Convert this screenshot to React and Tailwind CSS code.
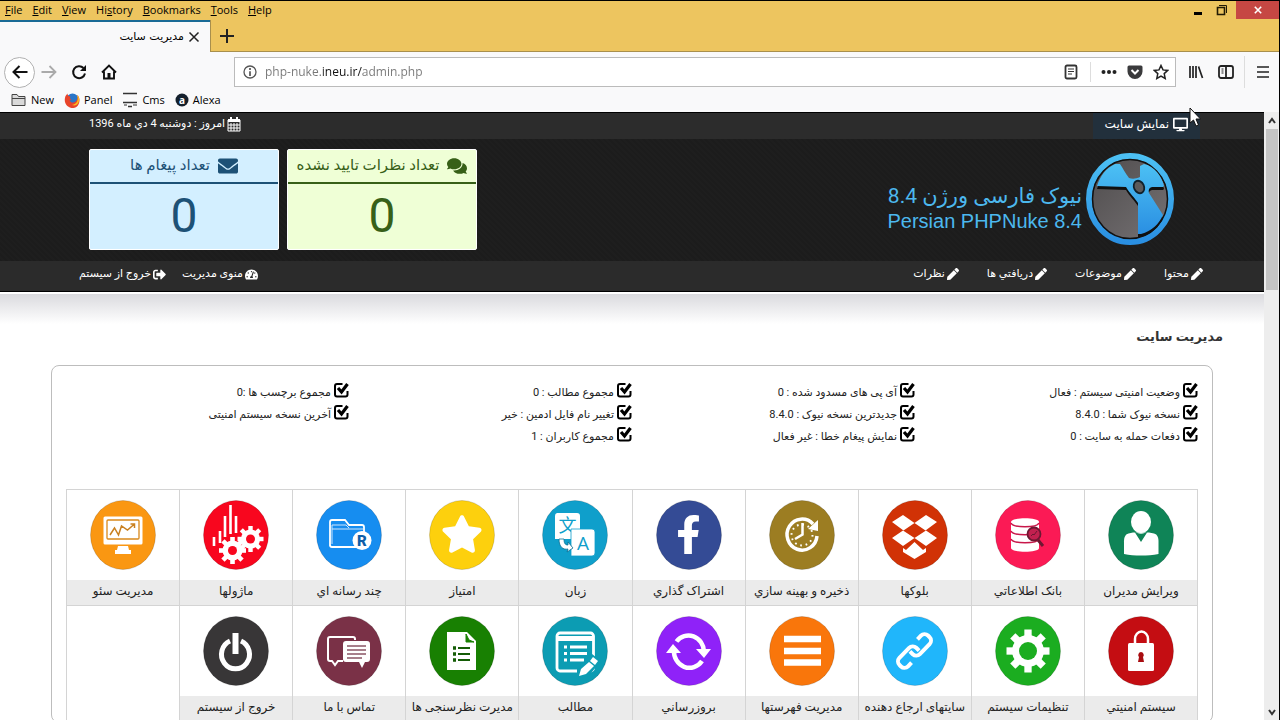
import { FaComments, FaDesktop, FaEnvelope, FaFacebookF, FaPen, FaSignOutAlt, FaStar, FaTachometerAlt } from 'react-icons/fa'

const menus = [
  ['', 'F', 'ile'],
  ['', 'E', 'dit'],
  ['', 'V', 'iew'],
  ['Hi', 's', 'tory'],
  ['', 'B', 'ookmarks'],
  ['', 'T', 'ools'],
  ['', 'H', 'elp'],
]

const contentLinks = ['محتوا', 'موضوعات', 'دريافتي ها', 'نظرات']

const stats = [
  ['وضعیت امنیتی سیستم : فعال', 'نسخه نیوک شما : 8.4.0', 'دفعات حمله به سایت : 0'],
  ['آی پی های مسدود شده : 0', 'جدیدترین نسخه نیوک : 8.4.0', 'نمایش پیغام خطا : غیر فعال'],
  ['مجموع مطالب : 0', 'تغییر نام فایل ادمین : خیر', 'مجموع کاربران : 1'],
  ['مجموع برچسب ها :0', 'آخرین نسخه سیستم امنیتی'],
]

function Gear({ cx, cy, r, hole, fill, color }) {
  return (
    <g transform={`translate(${cx} ${cy})`}>
      <g fill={color}>
        {[0, 45, 90, 135, 180, 225, 270, 315].map((a) => (
          <rect key={a} x={-r * 0.17} y={-r} width={r * 0.34} height={r * 0.5} transform={`rotate(${a})`} />
        ))}
        <circle r={r * 0.74} />
      </g>
      <circle r={hole} fill={fill} />
    </g>
  )
}

const tiles = [
  {
    label: 'ویرایش مدیران',
    color: '#0f8457',
    art: (
      <>
        <ellipse cx="33" cy="22" rx="10" ry="11" fill="#fff" />
        <path d="M25 32.500h16l5 1c3.500 1 4.500 4 4.500 8V54c-11 2-24 2-34.500 0V41.500c0-4 1-7 4.500-8z" fill="#fff" />
        <path d="M26 31l7 11 7-11c-4 3.500-10 3.500-14 0z" fill="#0f8457" />
      </>
    ),
  },
  {
    label: 'بانک اطلاعاتي',
    color: '#fb1a55',
    art: (
      <>
        <path d="M16 22c0-5 28-5 28 0v26c0 5-28 5-28 0z" fill="#fff" />
        <path d="M16 23c2 5 26 5 28 0M16 31c2 5 26 5 28 0M16 39c2 5 26 5 28 0" fill="none" stroke="#c8174a" strokeWidth="1.600" />
        <circle cx="39" cy="34" r="6.500" fill="#c2204f" stroke="#6d1732" strokeWidth="1.800" />
        <path d="M36 36l2-2 1 1 3-4" stroke="#6d1732" fill="none" />
        <path d="M43 40l5 6" stroke="#6d1732" strokeWidth="3" />
      </>
    ),
  },
  {
    label: 'بلوکها',
    color: '#d13206',
    art: (
      <g fill="#fff">
        <path d="M10 22l11-7 11.500 8-11 7.500z M55 22l-11-7-11.500 8 11 7.500z" />
        <path d="M10 38l11-7.500L32.500 38l-11.500 8z M55 38l-11-7.500L32.500 38l11.500 8z" />
        <path d="M21 48l3 2 8.500-8 8.500 8 3-2v4l-11.500 7L21 52z" />
      </g>
    ),
  },
  {
    label: 'ذخیره و بهینه سازي',
    color: '#9c7d22',
    art: (
      <>
        <path d="M44 24a15 15.500 0 1 0 4 12" fill="none" stroke="#fff" strokeWidth="3.500" />
        <path d="M49 20v11l-10-2z" fill="#fff" />
        <circle cx="33" cy="35" r="10.500" fill="none" stroke="#fff" strokeWidth="2" strokeDasharray="1.700 3.800" />
        <path d="M33.500 23v11.500L26 39" fill="none" stroke="#fff" strokeWidth="2.500" />
      </>
    ),
  },
  {
    label: 'اشتراک گذاري',
    color: '#344b95',
    art: <FaFacebookF x="13" y="15" size="39" color="#fff" />,
  },
  {
    label: 'زبان',
    color: '#0f9fcb',
    art: (
      <>
        <path d="M15 13h20a3 3 0 0 1 3 3v23H13V16a3 3 0 0 1 2-3z" fill="#fff" />
        <text x="25.500" y="32" textAnchor="middle" fontSize="18" fill="#0f9fcb" className="font-['Noto_Sans_CJK_SC',sans-serif]">文</text>
        <path d="M29 29h21a3 3 0 0 1 3 3v21a3 3 0 0 1-3 3H29z" fill="#fff" stroke="#0f9fcb" strokeWidth="0.800" />
        <text x="41" y="50" textAnchor="middle" fontSize="19" fill="#0f9fcb" className="font-['Open_Sans',sans-serif]">A</text>
        <path d="M17 39c0 8 4 11 9 10l-1 3 6-4-5-6v3c-3 0-4-2-4-6z" fill="#fff" stroke="#0b6f93" strokeWidth="0.800" />
      </>
    ),
  },
  {
    label: 'امتیاز',
    color: '#fdd00d',
    art: <FaStar x="12" y="13" size="42" color="#fff" />,
  },
  {
    label: 'چند رسانه اي',
    color: '#168df0',
    art: (
      <>
        <path d="M14 46V22a2 2 0 0 1 2-2h13l4 5h13a2 2 0 0 1 2 2v20H16a2 2 0 0 1-2-2z" fill="none" stroke="#fff" strokeWidth="1.800" />
        <path d="M16 29h31M16 44V25h14l3 3" fill="none" stroke="#cfe6fc" strokeWidth="1" />
        <circle cx="46" cy="40.500" r="9.500" fill="#fff" />
        <text x="46" y="46" textAnchor="middle" fontSize="15" fontWeight="900" fill="#0f5fa8" className="font-[Roboto,sans-serif]">R</text>
      </>
    ),
  },
  {
    label: 'ماژولها',
    color: '#f8061e',
    art: (
      <>
        <path d="M11 37v9M17 31v12M22 16v21M27.500 5v29M33 16v17" stroke="#fff" strokeWidth="2.600" />
        <Gear cx={47.5} cy={39} r={13} hole={4.5} fill="#f8061e" color="#fff" />
        <Gear cx={29.5} cy={50.5} r={13.5} hole={4.5} fill="#f8061e" color="#fff" />
      </>
    ),
  },
  {
    label: 'مدیریت سئو',
    color: '#fa9712',
    art: (
      <>
        <rect x="13.500" y="16.500" width="39" height="28" rx="1.500" fill="#fff" />
        <rect x="17" y="20" width="32" height="19" rx="1" fill="none" stroke="#d9891b" strokeWidth="1.300" />
        <path d="M20 35l4.500-7 4 7 3-9 6 4 7-6m-4 0h4v4" fill="none" stroke="#c98020" strokeWidth="1.500" />
        <path d="M28 46h10l1 4H27zM25 50h16v4H25z" fill="#fff" />
      </>
    ),
  },
  {
    label: 'سیستم امنیتي',
    color: '#c40d12',
    art: (
      <>
        <path d="M27 28v-5a6.500 7.500 0 0 1 13 0v5" fill="none" stroke="#fff" strokeWidth="2.500" />
        <rect x="20" y="27" width="26" height="28" rx="1.500" fill="#fff" />
        <path d="M33 36a3 3 0 0 1 2 5l1 5h-6l1-5a3 3 0 0 1 2-5z" fill="#a80c10" />
      </>
    ),
  },
  {
    label: 'تنظیمات سیستم',
    color: '#1bad20',
    art: <Gear cx={33} cy={35} r={21.5} hole={9} fill="#1bad20" color="#fff" />,
  },
  {
    label: 'سایتهای ارجاع دهنده',
    color: '#20b6fb',
    art: (
      <g transform="rotate(-46 32.500 35)" fill="none" stroke="#fff" strokeWidth="4">
        <path d="M22 41h-5a5 5 0 0 1-5-5v-2a5 5 0 0 1 5-5h14a5 5 0 0 1 5 5v4" />
        <path d="M43 29h5a5 5 0 0 1 5 5v2a5 5 0 0 1-5 5H34a5 5 0 0 1-5-5v-4" />
      </g>
    ),
  },
  {
    label: 'مدیریت فهرستها',
    color: '#f9760b',
    art: <path d="M15 23h37M15 35h37M15 46.500h37" stroke="#fff" strokeWidth="6.500" />,
  },
  {
    label: 'بروزرساني',
    color: '#8f22f8',
    art: (
      <g fill="none" stroke="#fff" strokeWidth="4.500">
        <path d="M20.500 25.500a15.500 16.500 0 0 1 27.500 10" />
        <path d="M46 45a15.500 16.500 0 0 1-28-11" />
        <path d="M40 33h15l-7 9zM10 37h15l-8-9z" fill="#fff" stroke="none" />
      </g>
    ),
  },
  {
    label: 'مطالب',
    color: '#0c9cb3',
    art: (
      <>
        <rect x="15" y="17" width="36.500" height="38" rx="3" fill="none" stroke="#fff" strokeWidth="2.800" />
        <path d="M14 20h38v5H14z" fill="#fff" />
        <path d="M22 31h3M22 37.500h3M22 44h3M28 31h17M28 37.500h17M28 44h14" stroke="#fff" strokeWidth="3" />
        <path d="M50 38l9 7-14 17H35V52z" fill="#0c9cb3" />
        <path d="M51 41l5 4-3 4-5-4zM47 46l5 4-8 8-7 2 2-7z" fill="#fff" />
      </>
    ),
  },
  {
    label: 'مدیرت نظرسنجی ها',
    color: '#188002',
    art: (
      <>
        <path d="M18 16h20l9 9v29H18z" fill="#fff" />
        <path d="M37 18v8h8l-5-2z" fill="#188002" stroke="#188002" />
        <path d="M29 32h12M29 38h12M29 44h12" stroke="#145c06" strokeWidth="2" />
        <path d="M24 32h3M24 38h3M24 44h3" stroke="#145c06" strokeWidth="3.500" />
      </>
    ),
  },
  {
    label: 'تماس با ما',
    color: '#7a3147',
    art: (
      <>
        <path d="M39 24v-1a2 2 0 0 0-2-2H14a2 2 0 0 0-2 2v20a2 2 0 0 0 2 2h2l3 4 3-4h5" fill="none" stroke="#fff" strokeWidth="2" />
        <path d="M30 25h21a3 3 0 0 1 3 3v15a3 3 0 0 1-3 3h-2l-3 6-3-6H30a3 3 0 0 1-3-3V28a3 3 0 0 1 3-3z" fill="#fff" />
        <path d="M31 30h19M31 34h19M31 38h19M31 42h15" stroke="#8b5565" strokeWidth="1.300" />
      </>
    ),
  },
  {
    label: 'خروج از سیستم',
    color: '#383637',
    art: (
      <>
        <path d="M27 25a14 14.500 0 1 0 11 0" fill="none" stroke="#fff" strokeWidth="5" />
        <path d="M32.500 17v21" stroke="#383637" strokeWidth="9" />
        <path d="M32.500 17v21" stroke="#fff" strokeWidth="6" />
      </>
    ),
  },
]

function CheckMark() {
  return (
    <svg viewBox="0 0 16 16" className="w-4 h-4 shrink-0 -mt-1.5" fill="none" stroke="#000">
      <path d="M9.500 2H4a2 2 0 0 0-2 2v8.500a2 2 0 0 0 2 2h8.500a2 2 0 0 0 2-2V9" strokeWidth="2" />
      <path d="M5 6l3.500 4L14.500 2" strokeWidth="3.200" />
    </svg>
  )
}

function CalendarIcon() {
  return (
    <svg viewBox="0 0 14 15" className="w-3.5 h-[15px]" fill="none" stroke="#fff">
      <path d="M1 3h12v11H1z" />
      <path d="M1 3.500h12" strokeWidth="3" />
      <path d="M4 6v8M7 6v8M10 6v8M1 8h12M1 11h12" />
      <path d="M4 0v4M10 0v4" strokeWidth="2" />
    </svg>
  )
}

function Tile({ tile }) {
  return (
    <a href="#" className="block border-l border-b border-[#d4d4d4]">
      <span className="flex h-[90px] items-center justify-center">
        <svg viewBox="0 0 66 70" className="w-[66px] h-[70px]">
          <ellipse cx="33" cy="35" rx="32.500" ry="34.500" fill={tile.color} stroke="#000" strokeOpacity="0.150" />
          {tile.art}
        </svg>
      </span>
      <span className="block h-[25px] bg-[#ebebeb] text-center text-xs leading-[22px] text-[#222] whitespace-nowrap">{tile.label}</span>
    </a>
  )
}

function CountCard({ icon, title, className }) {
  return (
    <div className={`w-[190px] h-[101px] rounded-xs border border-white text-center ${className}`}>
      <h2 className="h-[34px] flex items-center justify-center gap-2 border-b-2 border-current text-[15px] whitespace-nowrap">
        {icon}
        <span>{title}</span>
      </h2>
      <p className="text-5xl leading-[64px]">0</p>
    </div>
  )
}

function Browser() {
  return (
    <header className="shrink-0 bg-[#f9f9fa] text-xs text-black font-['Open_Sans',sans-serif]">
      <div className="bg-[#edc55f] border-t border-black">
        <div className="flex h-[19px] items-start justify-between">
          <nav className="flex gap-2.5 pl-[5px] text-[11px] leading-[18px]">
            {menus.map(([pre, key, rest]) => (
              <button key={key + rest}>{pre}<u>{key}</u>{rest}</button>
            ))}
          </nav>
          <div className="flex items-center">
            <button aria-label="Minimize" className="w-6 h-[18px] flex items-end justify-center pb-1"><span className="w-2 h-[3px] bg-black" /></button>
            <button aria-label="Restore" className="w-6 h-[18px] flex items-center justify-center">
              <svg viewBox="0 0 12 12" className="w-3 h-3" fill="none" stroke="#221b05">
                <path d="M1.500 3.500h7v7h-7z" strokeWidth="1.600" />
                <path d="M3 1.500h7.500V9" />
              </svg>
            </button>
            <button aria-label="Close" className="ml-0.5 w-[43px] h-[18px] bg-[#c64743] text-white flex items-center justify-center">
              <svg viewBox="0 0 10 10" className="w-2 h-2" stroke="#fff" strokeWidth="2"><path d="M1 1l8 8M9 1l-8 8" /></svg>
            </button>
          </div>
        </div>
        <div className="flex h-8">
          <div className="w-[210px] border-t-2 border-[#1a6b96] bg-[#f9f9fa] flex items-center justify-end gap-1 pr-2.5">
            <span dir="rtl" className="font-['DejaVu_Sans',sans-serif] text-[11px]">مدیریت سایت</span>
            <button aria-label="Close tab">
              <svg viewBox="0 0 12 12" className="w-3 h-3" stroke="#222" strokeWidth="1.500"><path d="M1.500 1.500l9 9M10.500 1.500l-9 9" /></svg>
            </button>
          </div>
          <button aria-label="New tab" className="w-8 flex items-center justify-center border-l border-b border-[#a88f4c]">
            <svg viewBox="0 0 14 14" className="w-3.5 h-3.5" stroke="#222" strokeWidth="2"><path d="M7 0v14M0 7h14" /></svg>
          </button>
          <div className="flex-1 border-b border-[#a88f4c]" />
        </div>
      </div>

      <div className="flex h-10 items-center">
        <button aria-label="Back" className="ml-1 w-[31px] h-[31px] rounded-full border border-[#b1b1b1] bg-white flex items-center justify-center">
          <svg viewBox="0 0 16 16" className="w-4 h-4" fill="none" stroke="#111" strokeWidth="2"><path d="M15.500 8H1.500M7.500 2L1.500 8l6 6" /></svg>
        </button>
        <button aria-label="Forward" className="ml-1.5">
          <svg viewBox="0 0 16 16" className="w-4 h-4" fill="none" stroke="#aaa" strokeWidth="1.800"><path d="M.5 8h14M8.500 2l6 6-6 6" /></svg>
        </button>
        <button aria-label="Reload" className="ml-3.5">
          <svg viewBox="0 0 16 16" className="w-4 h-4" fill="none" stroke="#111" strokeWidth="2"><path d="M12.500 4A6 6 0 1 0 14 9.500" /><path d="M15 1v6H9z" fill="#111" stroke="none" /></svg>
        </button>
        <button aria-label="Home" className="ml-3.5">
          <svg viewBox="0 0 16 16" className="w-4 h-4" fill="none" stroke="#111" strokeWidth="1.900"><path d="M1 8.500L8 1.500l7 7M3 7.500v7h10v-7" /><path d="M8 9v6" strokeWidth="3" /></svg>
        </button>
        <div className="ml-[117px] mr-3 flex-1 h-[30px] flex items-center bg-white border border-[#bbb] pl-2 pr-1.5">
          <svg viewBox="0 0 14 14" className="w-3.5 h-3.5 shrink-0" fill="none" stroke="#555"><circle cx="7" cy="7" r="6" strokeWidth="1.300" /><path d="M7 3v2M7 6.200v4.800" strokeWidth="1.700" /></svg>
          <input
            aria-label="Address"
            defaultValue="php-nuke.ineu.ir/admin.php"
            className="ml-2 min-w-0 flex-1 outline-none text-xs bg-clip-text text-transparent bg-[linear-gradient(90deg,#777_58px,#111_58px,#111_97px,#777_97px)]"
          />
          <svg viewBox="0 0 14 16" className="w-3.5 h-4" fill="none" stroke="#333"><rect x="1.500" y="1.500" width="11" height="13" rx="1.500" strokeWidth="1.800" /><path d="M4 5h6M4 7.500h6M4 10h4" /></svg>
          <span className="ml-3 mr-2.5 h-5 w-px bg-[#ddd]" />
          <svg viewBox="0 0 16 4" className="w-4 h-1" fill="#222"><circle cx="2.500" cy="2" r="2" /><circle cx="8" cy="2" r="2" /><circle cx="13.500" cy="2" r="2" /></svg>
          <svg viewBox="0 0 16 15" className="ml-2.5 w-4 h-4"><path d="M2 1h12a1.500 1.500 0 0 1 1.500 1.500V7a7.500 7.500 0 0 1-15 0V2.500A1.500 1.500 0 0 1 2 1z" fill="#3a3a3c" /><path d="M4.500 5.500L8 9l3.500-3.500" fill="none" stroke="#fff" strokeWidth="2" /></svg>
          <svg viewBox="0 0 16 16" className="ml-2.5 w-4 h-4" fill="none" stroke="#222" strokeWidth="1.500"><path d="M8 1.500l2 4.400 4.800.5-3.600 3.200 1 4.800L8 12l-4.200 2.400 1-4.800L1.200 6.400 6 5.900z" /></svg>
        </div>
        <button aria-label="Library">
          <svg viewBox="0 0 16 16" className="w-4 h-4" stroke="#222" strokeWidth="1.700"><path d="M2 2v12M5 2v12M8 2v12M10.500 2.500l4 11.500" /></svg>
        </button>
        <button aria-label="Sidebars" className="ml-3.5">
          <svg viewBox="0 0 16 14" className="w-4 h-3.5" fill="none" stroke="#222" strokeWidth="1.800"><rect x="1" y="1" width="14" height="12" rx="2" /><path d="M8 1v12" /><path d="M3.500 4h2M3.500 6h2M3.500 8h2" strokeWidth="1" /></svg>
        </button>
        <span className="ml-2.5 mr-3 w-px h-8 bg-[#ddd]" />
        <button aria-label="Menu" className="mr-2.5">
          <svg viewBox="0 0 12 12" className="w-3 h-3" stroke="#222" strokeWidth="1.700"><path d="M0 1h12M0 6h12M0 11h12" /></svg>
        </button>
      </div>

      <nav className="flex h-5 items-start gap-2.5 pl-[11px] text-[11px] leading-4">
        <a href="#" className="flex gap-1">
          <svg viewBox="0 0 16 14" className="w-4 h-4" fill="#d9d9d9" stroke="#444"><path d="M1 12.500v-11h5l1.500 2H14v9z" /><path d="M1 5.500h13" /></svg>
          New
        </a>
        <a href="#" className="flex gap-1">
          <svg viewBox="0 0 16 16" className="w-4 h-4"><circle cx="8.500" cy="7.500" r="6" fill="#2a76c8" /><path d="M1.500 4c-2 5 0 11 6 12 5 .5 8-3 8-8 0-2-1-4-2-5 .5 4-1 7-4 7.500-2 .3-3-.5-4-2l2-1c-2-.5-1.500-2-1-3-2 0-3-1-3-3z" fill="#e8442a" /><path d="M13 3c2 5 0 9-5 10 5 2 8-3 7-7-.3-1.500-1-2.500-2-3z" fill="#fbbd1e" /></svg>
          Panel
        </a>
        <a href="#" className="flex gap-1">
          <svg viewBox="0 0 16 16" className="w-4 h-4" stroke="#333"><path d="M1 1.500h14M1 10.500h14M6 14.500h4" strokeWidth="1.400" /><path d="M2 13h3M11 13h4" /></svg>
          Cms
        </a>
        <a href="#" className="flex gap-1">
          <svg viewBox="0 0 14 16" className="w-3.5 h-4"><circle cx="7" cy="8" r="6.500" fill="#14202c" /><text x="7" y="11.500" textAnchor="middle" fontSize="10" fontWeight="700" fill="#fff">a</text></svg>
          Alexa
        </a>
      </nav>
    </header>
  )
}

function SiteHeader() {
  return (
    <header className="border-y border-black bg-[#1d1d1d] text-[11px] text-white">
      <div className="flex h-[26px] items-center justify-between bg-[#2c2c2c] pr-16 pl-[89px]">
        <a href="#" className="h-full flex items-center gap-1 bg-[#22303c] px-3 pb-1 text-xs"><FaDesktop size={15} /> نمایش سایت</a>
        <p className="flex items-center gap-0.5 pb-1"><CalendarIcon /> <span>امروز : دوشنبه 4 دي ماه 1396</span></p>
      </div>
      <div className="flex h-[122px] items-center justify-between pb-0.5 pr-[90px] pl-[89px] bg-[repeating-linear-gradient(45deg,#1c1c1c_0px,#1c1c1c_2px,#1e1e1e_2px,#1e1e1e_4px)]">
        <div className="flex items-center gap-1 text-[#4cb8ee]">
          <svg viewBox="0 0 88 92" className="w-[88px] h-[92px]">
            <defs>
              <linearGradient id="ring" x1="0" y1="0" x2="0" y2="1"><stop offset="0" stopColor="#4cc0f4" /><stop offset="1" stopColor="#2a8fe2" /></linearGradient>
              <linearGradient id="disc" x1="0" y1="0" x2="1" y2="1"><stop offset="0" stopColor="#4d4a4b" /><stop offset="1" stopColor="#777375" /></linearGradient>
            </defs>
            <ellipse cx="44" cy="46" rx="41" ry="43" fill="url(#disc)" stroke="url(#ring)" strokeWidth="6" />
            <ellipse cx="44" cy="46" rx="37.500" ry="39.500" fill="none" stroke="#111" strokeWidth="1.500" />
            <path d="M11 33C14 23 20 15 29 11h5c3 4 5 9 9 14 3 1 7 1 11-1V13l4-2c10 2 18 12 20 22l-1 1H67c-3 0-5 2-4 6l14 22c-4 9-11 16-22 19h-3V50c-3-5-8-9-12-16z" fill="#101010" transform="translate(0 3)" />
            <path d="M11 33C14 23 20 15 29 11h5c3 4 5 9 9 14 3 1 7 1 11-1V13l4-2c10 2 18 12 20 22l-1 1H67c-3 0-5 2-4 6l14 22c-4 9-11 16-22 19h-3V50c-3-5-8-9-12-16z" fill="url(#ring)" />
            <ellipse cx="53" cy="34" rx="5" ry="6.500" fill="#5c5a5b" stroke="#10212c" strokeWidth="1.800" transform="rotate(-25 53 34)" />
          </svg>
          <div className="pt-5 text-xl leading-[25px]">
            <h1 className="text-[21px]">نیوک فارسی ورژن 8.4</h1>
            <p dir="ltr" className="font-['Liberation_Sans',sans-serif]">Persian PHPNuke 8.4</p>
          </div>
        </div>
        <div className="flex gap-2">
          <CountCard title="تعداد نظرات تایید نشده" icon={<FaComments size={20} />} className="bg-[#efffd6] text-[#376018]" />
          <CountCard title="تعداد پیغام ها" icon={<FaEnvelope size={20} />} className="bg-[#d3efff] text-[#1d5176]" />
        </div>
      </div>
      <nav className="flex h-[30px] items-center justify-between bg-[#2b2b2b] pb-1 pr-[61px] pl-[79px]">
        <div className="flex gap-7">
          {contentLinks.map((text) => (
            <a key={text} href="#" className="flex items-center gap-0.5"><FaPen size={12} /> {text}</a>
          ))}
        </div>
        <div className="flex gap-4">
          <a href="#" className="flex items-center gap-0.5"><FaTachometerAlt size={13} /> منوی مدیریت</a>
          <a href="#" className="flex items-center gap-0.5"><FaSignOutAlt size={13} /> خروج از سیستم</a>
        </div>
      </nav>
    </header>
  )
}

export default function App() {
  return (
    <div className="relative h-screen overflow-hidden flex flex-col bg-white border-r border-black">
      <Browser />
      <div className="flex flex-1 min-h-0">
        <div dir="rtl" className="flex-1 min-w-0 overflow-hidden font-[Roboto,'DejaVu_Sans',sans-serif]">
          <SiteHeader />
          <main className="border-t-2 border-white bg-[linear-gradient(#dadade,#fff_30px)] bg-no-repeat pt-[31px] pr-[51px] pl-[51px]">
            <h2 className="-mr-2.5 text-[13px] leading-6 font-bold text-[#333]">مدیریت سایت</h2>
            <section className="mt-4 rounded-lg border border-[#bdbdbd] px-3.5 pt-4">
              <div className="grid grid-cols-4 h-[107px]">
                {stats.map((list) => (
                  <ul key={list[0]} className="text-[11px] leading-[22px] text-[#222]">
                    {list.map((text) => (
                      <li key={text} className="flex items-center gap-0.5 whitespace-nowrap"><CheckMark /> {text}</li>
                    ))}
                  </ul>
                ))}
              </div>
              <div className="grid grid-cols-10 border-t border-r border-[#d4d4d4]">
                {tiles.map((tile) => (
                  <Tile key={tile.label + tile.color} tile={tile} />
                ))}
                <div className="border-l border-b border-[#d4d4d4]" />
              </div>
            </section>
          </main>
        </div>
        {/* Scrollbar */}
        <div className="w-[15px] shrink-0 bg-[#ededed] flex flex-col items-center">
          <svg viewBox="0 0 14 17" className="w-3.5 h-[17px]" fill="none" stroke="#333" strokeWidth="2"><path d="M4 11l3-4 3 4" /></svg>
          <div className="w-3 h-[161px] bg-[#c4c4c4]" />
          <svg viewBox="0 0 14 17" className="mt-auto w-3.5 h-[17px]" fill="none" stroke="#333" strokeWidth="2"><path d="M4 7l3 4 3-4" /></svg>
        </div>
      </div>
      {/* Mouse pointer */}
      <svg viewBox="0 0 12 20" className="absolute top-[107px] right-[78px] w-3 h-5"><path d="M1 1v15l3.500-3 2.500 6 2.500-1L7 12h4.500z" fill="#fff" stroke="#111" /></svg>
    </div>
  )
}
